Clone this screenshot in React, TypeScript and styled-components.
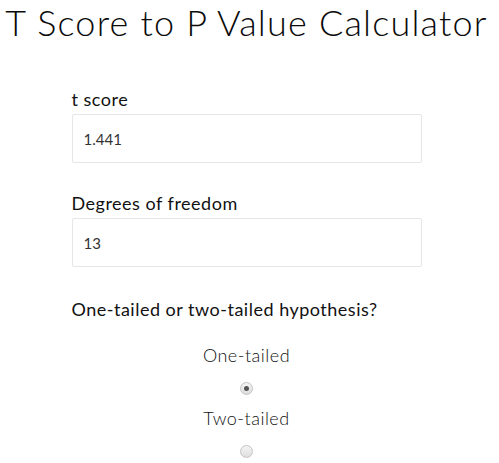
import styled, { createGlobalStyle } from 'styled-components';

const GlobalStyle = createGlobalStyle`
    body {
        margin: 0;
        background: #ffffff;
        font-family: Lato, "Open Sans", sans-serif;
        color: #111;
    }
`;

export default function App() {
    return (
        <>
            <GlobalStyle />
            <Page>
                <Title>T Score to P Value Calculator</Title>
                <Form>
                    <Field>
                        <Label htmlFor="tscore">t score</Label>
                        <Input id="tscore" defaultValue="1.441" />
                    </Field>
                    <Field>
                        <Label htmlFor="df">Degrees of freedom</Label>
                        <Input id="df" defaultValue="13" />
                    </Field>
                    <Question>One-tailed or two-tailed hypothesis?</Question>
                    <Choices>
                        <Choice>
                            One-tailed
                            <Radio type="radio" name="tails" defaultChecked />
                        </Choice>
                        <Choice>
                            Two-tailed
                            <Radio type="radio" name="tails" />
                        </Choice>
                    </Choices>
                </Form>
            </Page>
        </>
    );
}

const Page = styled.div`
    width: 493px;
    display: flex;
    flex-direction: column;
    align-items: center;
`;

const Title = styled.h1`
    margin: 0;
    padding-top: 2px;
    font-size: 36px;
    font-weight: 300;
    letter-spacing: 1.2px;
    line-height: 40px;
    white-space: nowrap;
    color: #0a0a0a;
`;

const Form = styled.div`
    width: 350px;
    margin-top: 46px;
    display: flex;
    flex-direction: column;
`;

const Field = styled.div`
    display: flex;
    flex-direction: column;
    margin-bottom: 29px;
`;

const Label = styled.label`
    font-size: 18px;
    font-weight: 400;
    letter-spacing: 0.5px;
    line-height: 22px;
    margin-bottom: 4px;
    color: #111;
`;

const Input = styled.input`
    box-sizing: border-box;
    height: 49px;
    width: 100%;
    padding: 0 11px;
    border: 1px solid #e6e6e6;
    border-radius: 2px;
    font-family: Lato, sans-serif;
    font-size: 15px;
    color: #333;
    outline: none;
`;

const Question = styled(Label).attrs({ as: 'div' })`
    margin: 2px 0 0;
`;

const Choices = styled.div`
    display: flex;
    flex-direction: column;
    align-items: center;
    margin-top: 24px;
`;

const Choice = styled.label`
    display: flex;
    flex-direction: column;
    align-items: center;
    font-size: 18px;
    font-weight: 300;
    letter-spacing: 0.5px;
    line-height: 22px;
    color: #111;
    margin-bottom: 12px;
`;

const Radio = styled.input`
    appearance: none;
    box-sizing: border-box;
    width: 13px;
    height: 13px;
    margin: 16px 0 0;
    border-radius: 50%;
    border: 1px solid #c4c4c4;
    background: linear-gradient(#f4f4f4, #dedede);
    position: relative;

    &:checked::after {
        content: '';
        position: absolute;
        left: 3px;
        top: 3px;
        width: 5px;
        height: 5px;
        border-radius: 50%;
        background: #555;
    }
`;
